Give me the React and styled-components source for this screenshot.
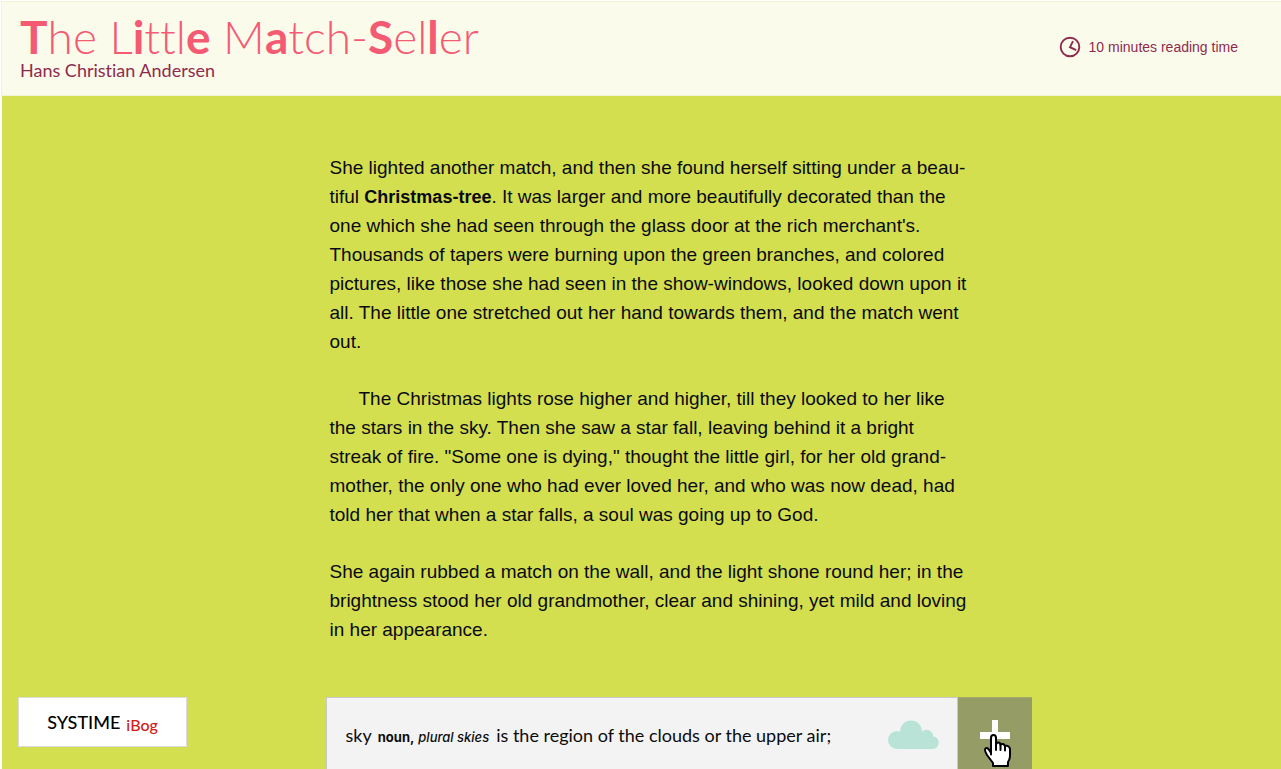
import React from 'react';
import styled, { createGlobalStyle } from 'styled-components';

const GlobalStyle = createGlobalStyle`
  *, *::before, *::after { box-sizing: border-box; }
  body {
    margin: 0;
    background: #fff;
    color: #0a0a14;
    font-family: Lato, "Open Sans", sans-serif;
    font-variant-ligatures: none;
  }
`;

const Page = styled.div`
  display: flex;
  flex-direction: column;
  min-height: 100vh;
  padding: 1px 0 0 1px;
`;

const Header = styled.header`
  display: flex;
  justify-content: space-between;
  align-items: flex-start;
  height: 95px;
  padding: 11px 43px 0 18px;
  background: #fbfbec;
  border: solid #f2f3d3;
  border-width: 1px 0 1px 1px;
`;

const Title = styled.h1`
  margin: 0;
  color: #f45b73;
  font-size: 46px;
  font-weight: 300;
  line-height: 48px;
  white-space: nowrap;
`;

const Strong = styled.b`
  font-weight: 700;
`;

const Author = styled.p`
  margin: 0;
  color: #8e2a4c;
  font-size: 18px;
  line-height: 18px;
`;

const ReadingTime = styled.p`
  display: flex;
  align-items: center;
  gap: 8px;
  margin: 23px 0 0;
  color: #8e2a4c;
  font: 14px/22px "Liberation Sans", Arial, sans-serif;
`;

const Reader = styled.div`
  flex: 1;
  display: flex;
  flex-direction: column;
  justify-content: space-between;
  margin-left: 1px;
  background: #d3df4f;
`;

const Columns = styled.div`
  display: grid;
  grid-template-columns: 1fr minmax(0, 632px) 1fr;
`;

const Article = styled.main`
  grid-column: 2;
  padding: 57px 0 0 4px;
  font: 19px/29px "Liberation Sans", Arial, sans-serif;
  white-space: nowrap;
`;

const Paragraph = styled.p`
  margin: 0 0 28px;
  text-indent: ${(p) => (p.$indent ? '29px' : '0')};
`;

const Term = styled.b`
  font-size: 18px;
  line-height: 1;
`;

const Brand = styled.a`
  display: flex;
  align-items: baseline;
  justify-content: center;
  gap: 6px;
  width: 169px;
  height: 50px;
  margin-left: 16px;
  background: #fff;
  border: 1px solid #d9dbdc;
  color: #000;
  font-size: 18px;
  font-weight: 500;
  line-height: 48px;
  text-decoration: none;
`;

const Product = styled.span`
  position: relative;
  top: 2px;
  color: #cf2018;
  font-size: 16px;
`;

const Glossary = styled.section`
  display: flex;
  align-items: center;
  justify-content: space-between;
  height: 72px;
  padding: 4px 18px 0 19px;
  background: #f3f3f3;
  border: solid #c6c9cb;
  border-width: 1px 1px 0 1px;
`;

const Definition = styled.p`
  display: flex;
  align-items: baseline;
  margin: 0;
  color: #0c0c0c;
  font-size: 18px;
  line-height: 24px;
  white-space: nowrap;
`;

const WordClass = styled.b`
  margin: 0 4px 0 6px;
  font: 700 13px/24px Inter, sans-serif;
`;

const Plural = styled.i`
  margin-right: 7px;
  font: italic 500 13px/24px Inter, sans-serif;
`;

const Cloud = styled.svg`
  display: block;
  margin-bottom: 2px;
`;

const AddButton = styled.button`
  display: flex;
  justify-content: center;
  align-items: flex-start;
  position: relative;
  width: 74px;
  height: 72px;
  padding: 22px 0 0;
  background: #969c66;
  border: 0;
  border-top: 1px solid #a3a968;
`;

const Pointer = styled.svg`
  position: absolute;
  left: 26px;
  top: 36px;
`;

export default function App() {
  return (
    <>
      <GlobalStyle />
      <Page>
        <Header>
          <div>
            <Title>
              <Strong>T</Strong>he L<Strong>i</Strong>ttl<Strong>e</Strong> M
              <Strong>a</Strong>tch-<Strong>S</Strong>el<Strong>l</Strong>er
            </Title>
            <Author>Hans Christian Andersen</Author>
          </div>
          <ReadingTime>
            <svg width="22" height="22" viewBox="0 0 22 22" fill="none" stroke="#8e2a4c" aria-hidden="true">
              <circle cx="11" cy="11" r="9.3" strokeWidth="1.9" />
              <path d="M14 5.200 11 11.200l6.200 3" strokeWidth="1.9" />
            </svg>
            10 minutes reading time
          </ReadingTime>
        </Header>
        <Reader>
          <Columns>
            <Article>
              <Paragraph>
                She lighted another match, and then she found herself sitting under a beau-<br />
                tiful <Term>Christmas-tree</Term>. It was larger and more beautifully decorated than the<br />
                one which she had seen through the glass door at the rich merchant's.<br />
                Thousands of tapers were burning upon the green branches, and colored<br />
                pictures, like those she had seen in the show-windows, looked down upon it<br />
                all. The little one stretched out her hand towards them, and the match went<br />
                out.
              </Paragraph>
              <Paragraph $indent>
                The Christmas lights rose higher and higher, till they looked to her like<br />
                the stars in the sky. Then she saw a star fall, leaving behind it a bright<br />
                streak of fire. "Some one is dying," thought the little girl, for her old grand-<br />
                mother, the only one who had ever loved her, and who was now dead, had<br />
                told her that when a star falls, a soul was going up to God.
              </Paragraph>
              <Paragraph>
                She again rubbed a match on the wall, and the light shone round her; in the<br />
                brightness stood her old grandmother, clear and shining, yet mild and loving<br />
                in her appearance.
              </Paragraph>
            </Article>
          </Columns>
          <Columns as="footer">
            <Brand href="#">
              SYSTIME <Product>iBog</Product>
            </Brand>
            <Glossary aria-label="Glossary">
              <Definition>
                sky <WordClass>noun,</WordClass> <Plural>plural skies</Plural> is the region of the clouds or the upper air;
              </Definition>
              <Cloud width="52" height="30" viewBox="0 0 52 30" fill="#bae3d7" aria-hidden="true">
                <circle cx="10" cy="20" r="9" />
                <circle cx="24" cy="11.5" r="11" />
                <circle cx="39.500" cy="16.5" r="6.8" />
                <circle cx="45.300" cy="22.600" r="6.4" />
                <path d="M10 16h30l5.300 13H10z" />
              </Cloud>
            </Glossary>
            <AddButton aria-label="Add word">
              <svg width="30" height="20" viewBox="0 0 30 20" fill="#fff" aria-hidden="true">
                <path d="M12 0h6v12h12v7H0v-7h12z" />
              </svg>
              <Pointer width="28" height="34" viewBox="0 0 28 34" fill="#fff" stroke="#000" strokeWidth="2" strokeLinejoin="round" strokeLinecap="round" aria-hidden="true">
                <path d="M7 20.500V4Q7 1 9.500 1T12 4V11Q12 8.500 14.200 8.500T16.500 11Q16.700 9.800 18.700 10T21 12.500Q21.200 11.600 23 11.800T26 14.500V22Q26 25 24 28V32H9V29L3 21Q0 16 1.500 14.500Q3.500 13 5.500 16.500L7 19" />
                <path d="M12 10v6M16.500 11v5M21 12.500v4" />
              </Pointer>
            </AddButton>
          </Columns>
        </Reader>
      </Page>
    </>
  );
}
